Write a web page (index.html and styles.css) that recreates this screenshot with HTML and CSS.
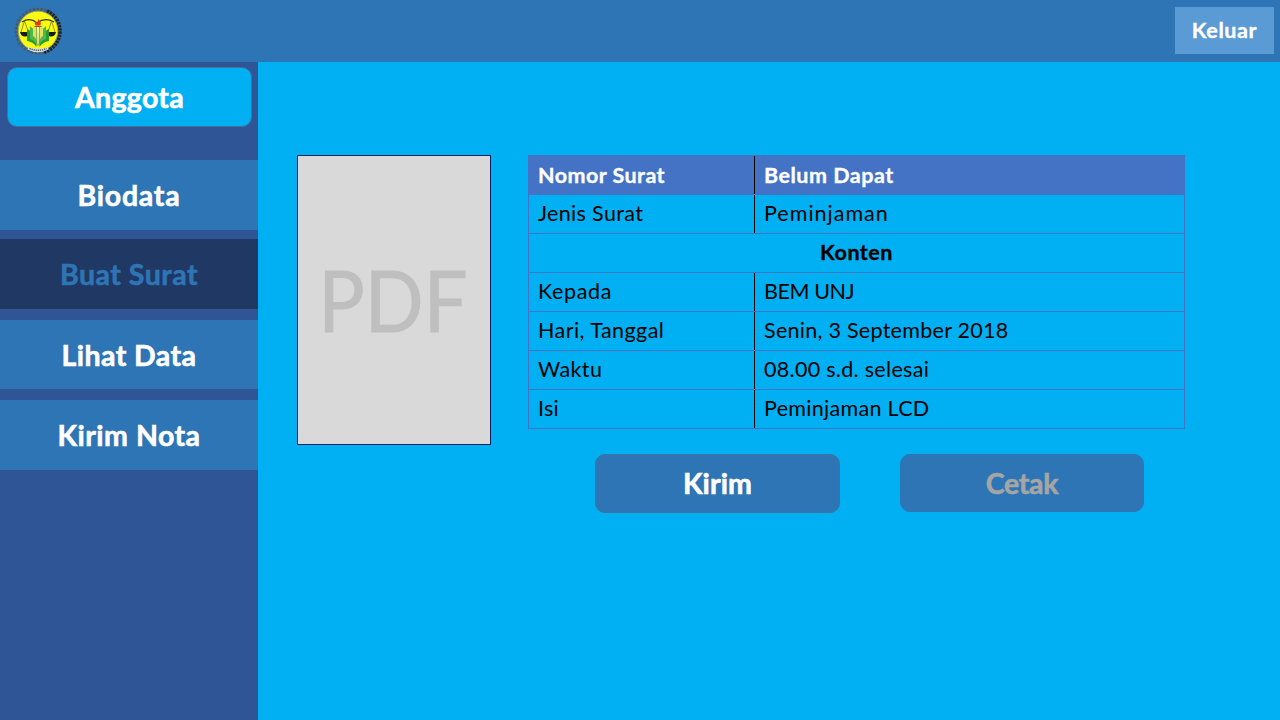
FILE: index.html
```html
<!DOCTYPE html>
<html lang="id">
<head>
<meta charset="utf-8">
<title>Buat Surat</title>
<link rel="stylesheet" href="styles.css">
</head>
<body>
<header class="topbar">
  <svg class="logo" viewBox="0 0 50 50" width="50" height="50">
    <circle cx="25" cy="25" r="22" fill="none" stroke="#4b5966" stroke-width="2.600" stroke-dasharray="2.6 1.3"/>
    <path d="M34 5A22 22 0 0 1 31 46.200" fill="none" stroke="#1d2733" stroke-width="3.800" stroke-dasharray="2.200 1"/>
    <circle cx="25" cy="25" r="19.800" fill="#fbfb12" stroke="#a6a83c" stroke-width=".8"/>
    <path d="M9 16Q17 11 24 17Q32 11 41 16" fill="none" stroke="#37371a" stroke-width="1.200"/>
    <path d="M11.500 15L8 26M11.500 15L15.500 26M38.500 15L35 26M38.500 15L42 26" fill="none" stroke="#77772a" stroke-width=".8"/>
    <path d="M7 26h10q-1 4.500-5 4.500T7 26zM33 26h10q-1 4.500-5 4.500t-5-4.500z" fill="#161d0d"/>
    <path d="M14 23l9.500 5v13q-3-5-9.500-6zM36 23l-9.500 5v13q3-5 9.500-6z" fill="#249b35"/>
    <path d="M17 20l6.500 6v13q-2-5-6.500-6zM33 20l-6.500 6v13q2-5 6.500-6z" fill="#55b743"/>
    <path d="M20 18l3.500 5v12q-1-4-3.500-5zM30 18l-3.500 5v12q1-4 3.500-5z" fill="#d9e85a"/>
    <path d="M23.500 20h3l-.5 19h-2z" fill="#f7f8ac" stroke="#62712d" stroke-width=".6"/>
    <path d="M25 13q4 3 2.300 6.500h-4.600Q20.500 16.500 23 15l.8 1.500Q25.500 15 25 13z" fill="#e63b16"/>
    <path d="M21.500 20.500h7" stroke="#a5521a" stroke-width="1"/>
    <path d="M15.500 41Q25 44 34.500 41l1 2.500Q25 49 14.500 43.500z" fill="#d8dfd8"/>
    <path d="M16.500 42.500Q25 46 33.500 42.500" fill="none" stroke="#536579" stroke-width="1.500" stroke-dasharray="1.300 .8"/>
  </svg>
  <button class="logout"><span class="t-keluar">Keluar</span></button>
</header>
<div class="body">
  <aside class="sidebar">
    <div class="role"><span class="t-anggota">Anggota</span></div>
    <nav class="menu">
      <a class="item"><span class="t-biodata">Biodata</span></a>
      <a class="item active"><span class="t-buat">Buat Surat</span></a>
      <a class="item lihat"><span class="t-lihat">Lihat Data</span></a>
      <a class="item"><span class="t-nota">Kirim Nota</span></a>
    </nav>
  </aside>
  <main class="content">
    <div class="preview"><span class="t-pdf">PDF</span></div>
    <section class="detail">
      <div class="table">
        <div class="row head"><div class="key"><span class="t-nomor">Nomor Surat</span></div><div class="val"><span class="t-belum">Belum Dapat</span></div></div>
        <div class="row"><div class="key"><span class="t-jenis">Jenis Surat</span></div><div class="val"><span class="t-pinjam">Peminjaman</span></div></div>
        <div class="row full"><span class="t-konten">Konten</span></div>
        <div class="row"><div class="key"><span class="t-kepada">Kepada</span></div><div class="val"><span class="t-bem">BEM UNJ</span></div></div>
        <div class="row"><div class="key"><span class="t-hari">Hari, Tanggal</span></div><div class="val"><span class="t-senin">Senin, 3 September 2018</span></div></div>
        <div class="row"><div class="key"><span class="t-waktu">Waktu</span></div><div class="val"><span class="t-jam">08.00 s.d. selesai</span></div></div>
        <div class="row"><div class="key"><span class="t-isi">Isi</span></div><div class="val"><span class="t-lcd">Peminjaman LCD</span></div></div>
      </div>
      <div class="actions">
        <button class="action"><span class="t-kirim">Kirim</span></button>
        <button class="action disabled"><span class="t-cetak">Cetak</span></button>
      </div>
    </section>
  </main>
</div>
</body>
</html>
```
FILE: styles.css
```css
* { box-sizing: border-box; }
body { margin: 0; width: 1280px; height: 720px; overflow: hidden; font-family: Lato, "Open Sans", sans-serif; background: #00b0f3; }
button { font: inherit; border: 0; padding: 0; }
span { white-space: nowrap; }
.topbar { height: 62px; background: #2e75b6; display: flex; justify-content: space-between; align-items: flex-start; padding: 7px 6px 0 13px; }
.logo { display: block; margin-top: -1px; }
.logout { width: 99px; height: 47px; padding-bottom: 2px; background: #5b9bd5; color: #fff; font-size: 21.5px; font-weight: 700; }
.role, .item, .action { -webkit-text-stroke: .6px currentColor; }
.logout, .head, .full { -webkit-text-stroke: .35px currentColor; }
.body { display: flex; height: 658px; }
.sidebar { width: 258px; background: #2f5597; }
.role { margin: 5px 6px 0 7px; height: 60px; border: 1px solid #41719c; border-radius: 10px; background: #00b0f3; }
.role, .item, .action { display: flex; align-items: center; justify-content: center; color: #fff; font-size: 28.5px; font-weight: 700; line-height: 34px; }
.menu { display: flex; flex-direction: column; padding-top: 33px; }
.item { height: 70px; background: #2e75b6; }
.item.active { margin: 9px 0 11px; background: #203864; color: #2e75b6; }
.item.lihat { height: 69px; margin-bottom: 11px; }
.content { flex: 1; display: flex; align-items: flex-start; gap: 37px; padding: 93px 0 0 39px; }
.preview { width: 194px; height: 290px; padding: 0 2px 2px 0; border: 1px solid #0b1f5c; background: #d9d9d9; color: #bfbfbf; font-size: 85px; -webkit-text-stroke: 1px #bfbfbf; display: flex; align-items: center; justify-content: center; }
.table { width: 657px; height: 274px; border: 1px solid #4472c4; border-bottom: 0; font-size: 21.5px; color: #000; }
.row { height: 39px; border-bottom: 1px solid #4472c4; display: flex; line-height: 36px; }
.key { width: 226px; border-right: 1px solid #000; padding-left: 9px; }
.val { padding-left: 9px; }
.head { background: #4472c4; color: #fff; font-weight: 700; line-height: 38px; }
.full { justify-content: center; font-weight: 700; }
.actions { display: flex; gap: 60px; padding: 25px 0 0 67px; }
.action { width: 245px; height: 59px; padding-bottom: 1px; border-radius: 10px; background: #2e75b6; border: 1px solid #41719c; }
.action.disabled { width: 244px; height: 58px; padding-bottom: 0; color: #a5a5a5; border-color: #2e75b6; }

/* Tracking per label */
.t-keluar { letter-spacing: .6px; }
.t-anggota { letter-spacing: .3px; }
.t-biodata { letter-spacing: .75px; }
.t-buat, .t-nota { letter-spacing: .5px; }
.t-lihat { letter-spacing: .45px; }
.t-kirim { letter-spacing: .1px; }
.t-cetak { letter-spacing: -.3px; }
.t-pdf { transform: scaleX(.91); }
.t-nomor { letter-spacing: .45px; }
.t-belum, .t-konten { letter-spacing: .5px; }
.t-jenis { letter-spacing: .35px; }
.t-pinjam { letter-spacing: 1px; }
.t-kepada { letter-spacing: .65px; }
.t-bem { letter-spacing: -.4px; }
.t-hari { letter-spacing: .45px; }
.t-senin { letter-spacing: .28px; }
.t-waktu { letter-spacing: .4px; }
.t-jam, .t-lcd { letter-spacing: .3px; }
.t-isi { letter-spacing: .2px; }
```
